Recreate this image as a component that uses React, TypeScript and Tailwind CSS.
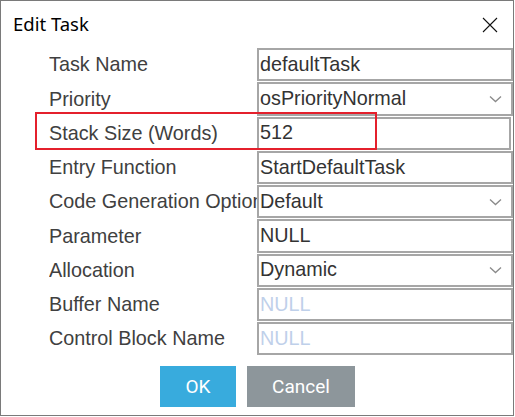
import React from "react";

type Row = {
  label: string;
  value: string;
  kind?: "select" | "text";
  placeholder?: boolean;
  narrow?: boolean;
};

const rows: Row[] = [
  { label: "Task Name", value: "defaultTask" },
  { label: "Priority", value: "osPriorityNormal", kind: "select" },
  { label: "Stack Size (Words)", value: "512", narrow: true },
  { label: "Entry Function", value: "StartDefaultTask" },
  { label: "Code Generation Option", value: "Default", kind: "select" },
  { label: "Parameter", value: "NULL" },
  { label: "Allocation", value: "Dynamic", kind: "select" },
  { label: "Buffer Name", value: "NULL", placeholder: true },
  { label: "Control Block Name", value: "NULL", placeholder: true },
];

const Chevron = () => (
  <svg width="13" height="8" viewBox="0 0 13 8" className="shrink-0">
    <path d="M1 1.5 L6.5 6.5 L12 1.5" fill="none" stroke="#8a8a8a" strokeWidth="1.3" />
  </svg>
);

export default function App() {
  return (
    <div className="relative w-[515px] h-[417px] bg-white font-['Liberation_Sans',Arial,sans-serif]">
      <div className="w-[514px] h-[416px] border border-[#7a7a7a] flex flex-col bg-white">
        {/* title bar */}
        <div className="h-[47px] flex items-center justify-between pl-[12px] pr-[15px] shrink-0">
          <span className="font-['Noto_Sans',sans-serif] text-[18.5px] text-black leading-none">Edit Task</span>
          <svg width="16" height="16" viewBox="0 0 16 16">
            <path d="M1 1 L15 15 M15 1 L1 15" stroke="#111" strokeWidth="1.1" fill="none" />
          </svg>
        </div>

        {/* fields */}
        <div className="flex flex-col pl-[48px]">
          {rows.map((r) => (
            <div key={r.label} className="h-[34.25px] flex items-stretch">
              <div className="w-[208px] shrink-0 overflow-hidden whitespace-nowrap flex items-center text-[19.8px] text-[#404040]">
                {r.label}
              </div>
              <div
                className={
                  "flex-1 mb-[1px] border-2 border-[#a6a6a6] flex items-center pl-[1px] pr-[9px] text-[19.8px] " +
                  (r.narrow ? "mr-[2px] " : "") +
                  (r.placeholder ? "text-[#bfd0ea]" : "text-[#333]")
                }
              >
                <span className="flex-1 whitespace-nowrap">{r.value}</span>
                {r.kind === "select" && <Chevron />}
              </div>
            </div>
          ))}
        </div>

        {/* buttons */}
        <div className="flex gap-[11px] pl-[159px] mt-[10px]">
          <button className="w-[76px] h-[41px] bg-[#38abdd] text-white text-[19px] font-['Roboto',sans-serif]">
            OK
          </button>
          <button className="w-[108px] h-[41px] bg-[#8d969b] text-white text-[19px] font-['Roboto',sans-serif]">
            Cancel
          </button>
        </div>
      </div>

      {/* red annotation box */}
      <div className="absolute left-[35px] top-[112px] w-[342px] h-[38px] border-2 border-[#e4202c] pointer-events-none" />
    </div>
  );
}
